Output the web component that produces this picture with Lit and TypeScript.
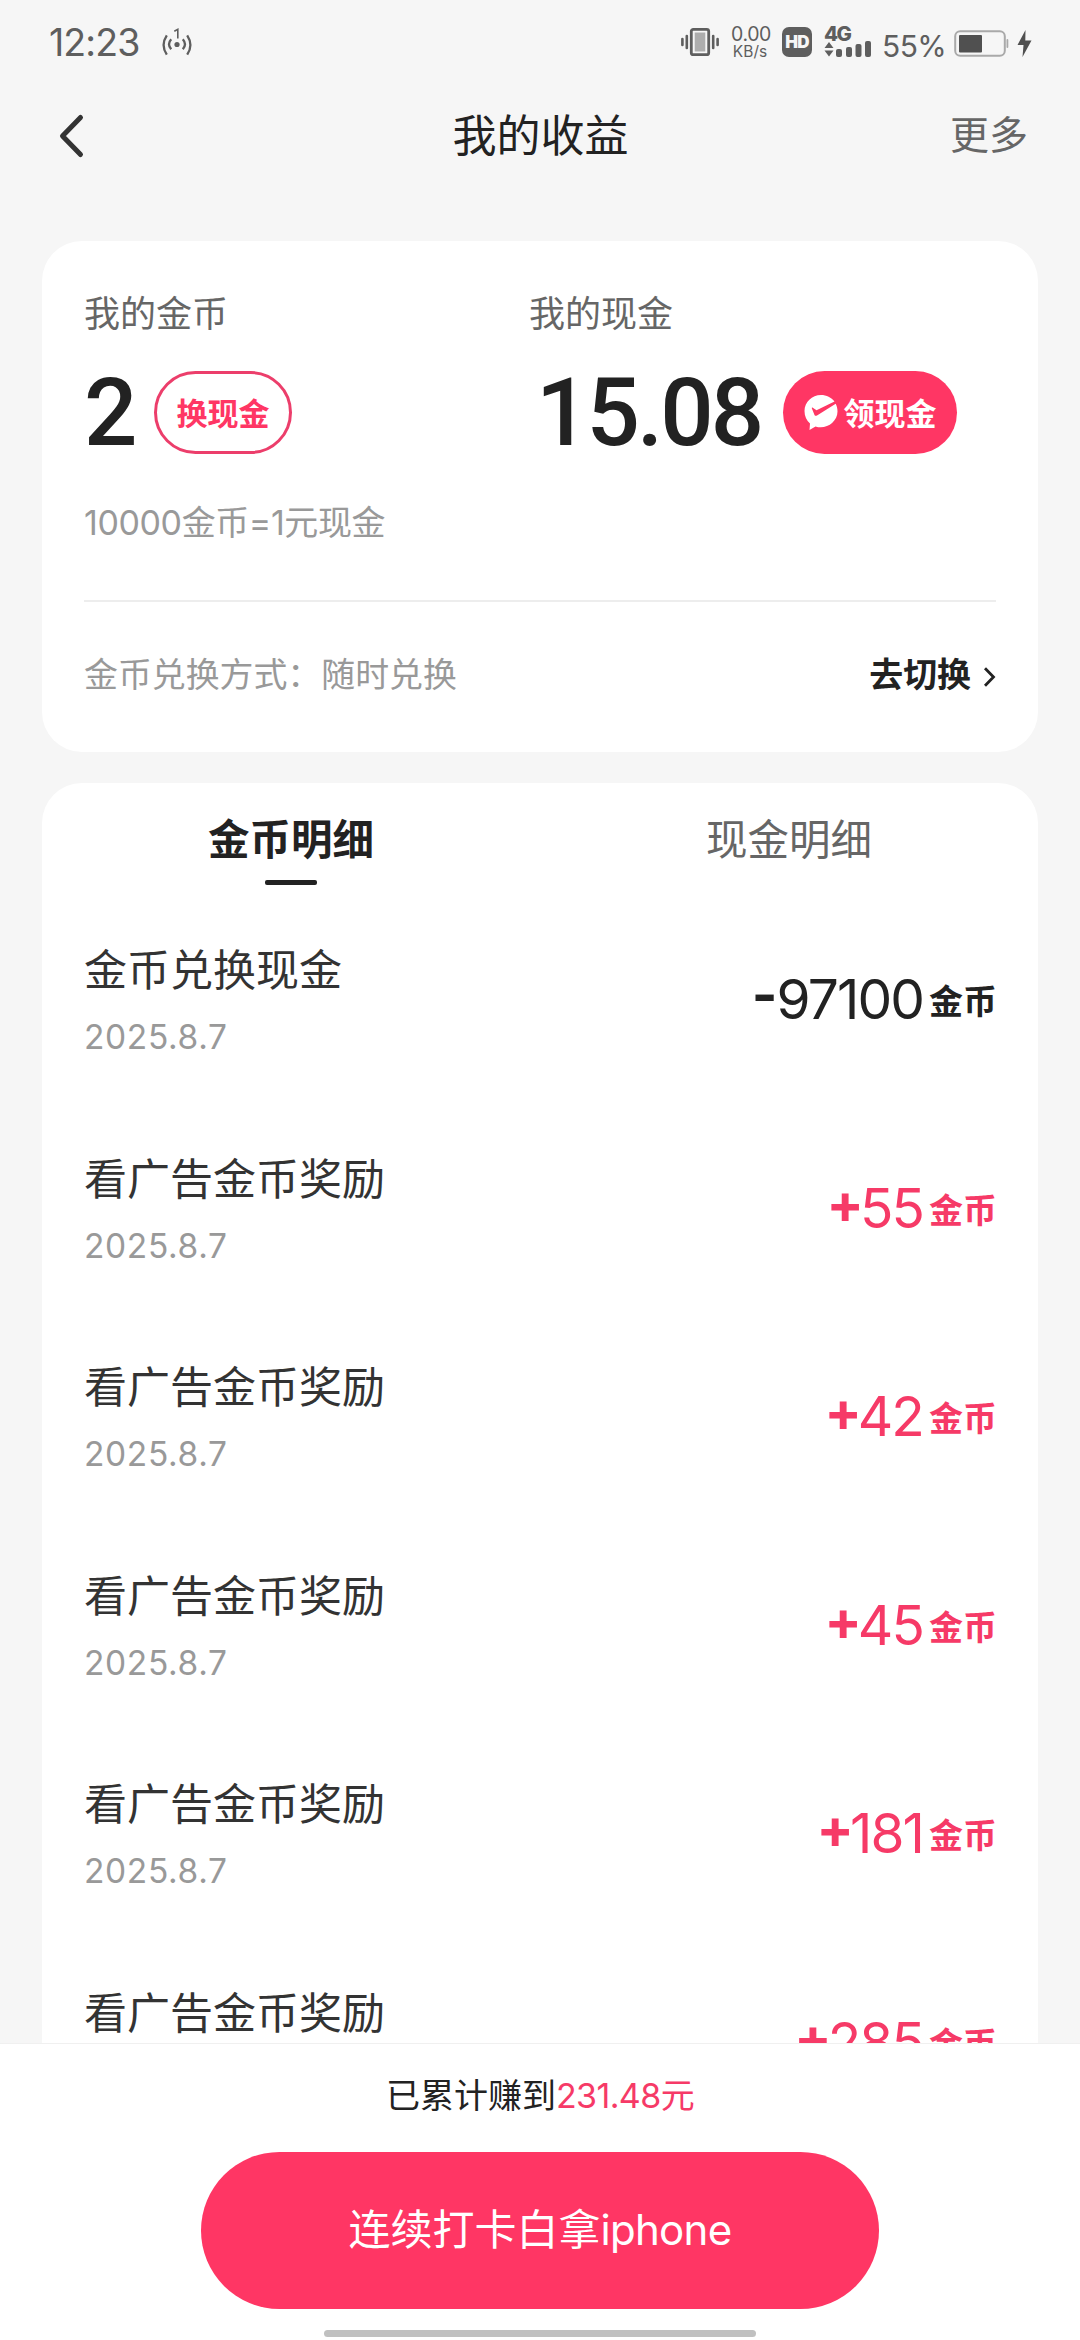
import { LitElement, html, css, nothing } from "lit";
import { customElement, property } from "lit/decorators.js";
import { classMap } from "lit/directives/class-map.js";

interface Entry {
  title: string;
  date?: string;
  sign: "+" | "-";
  amount: string;
}

const ENTRIES: Entry[] = [
  { title: "金币兑换现金", date: "2025.8.7", sign: "-", amount: "97100" },
  { title: "看广告金币奖励", date: "2025.8.7", sign: "+", amount: "55" },
  { title: "看广告金币奖励", date: "2025.8.7", sign: "+", amount: "42" },
  { title: "看广告金币奖励", date: "2025.8.7", sign: "+", amount: "45" },
  { title: "看广告金币奖励", date: "2025.8.7", sign: "+", amount: "181" },
  { title: "看广告金币奖励", sign: "+", amount: "285" },
];

@customElement("status-bar")
class StatusBar extends LitElement {
  static styles = css`
    :host {
      display: flex;
      justify-content: space-between;
      height: 84px;
      padding: 0 48px 0 49px;
      box-sizing: border-box;
      color: #5e5e5e;
    }
    svg { display: block; flex: none; }
    .side { display: flex; align-items: flex-start; }
    .time { font-size: 37.5px; line-height: 44px; margin-top: 21px; width: 113px; letter-spacing: -0.9px; white-space: nowrap; }
    .hotspot { margin-top: 27px; }
    .vibrate { margin-top: 27px; }
    .speed { width: 38px; margin: 24px 0 0 12px; text-align: center; white-space: nowrap; }
    .rate { font-size: 19.5px; line-height: 20px; letter-spacing: -0.4px; }
    .unit { font-size: 15.5px; line-height: 16px; }
    .hd {
      width: 30px; height: 30px; margin: 27px 0 0 13px; border-radius: 7px;
      background: #5e5e5e; color: #f6f6f6; text-align: center;
      font: 900 17px/30px Inter, sans-serif; letter-spacing: -0.8px;
    }
    .cell { width: 48px; margin: 26px 0 0 12px; }
    .net { font: 800 20.5px/16px Inter, sans-serif; letter-spacing: -1.6px; }
    .percent { width: 63px; margin: 29px 0 0 10px; font-size: 30px; line-height: 34px; letter-spacing: -0.6px; white-space: nowrap; }
    .battery { margin: 29px 0 0 9px; }
    .bolt { margin: 30px 0 0 8px; }
  `;

  render() {
    return html`
      <div class="side">
        <div class="time">12:23</div>
        <svg class="hotspot" width="30" height="30" viewBox="0 0 30 30" fill="none" stroke="#5e5e5e" stroke-width="2.3">
          <circle cx="15" cy="17.5" r="2.6" fill="#5e5e5e" stroke="none" />
          <path d="M9.2 12.3q-4.4 5 0 10M20.8 12.3q4.4 5 0 10M4.8 8.3q-6.4 9.7 0 19.4M25.2 8.3q6.4 9.7 0 19.4" />
          <path d="M12.3 4.2L15.8 2.3V11.5" stroke-width="1.6" />
        </svg>
      </div>
      <div class="side">
        <svg class="vibrate" width="38" height="30" viewBox="0 0 38 30">
          <rect x="10.3" y="2.3" width="17.4" height="25.4" rx="2" fill="none" stroke="#5e5e5e" stroke-width="2.8" />
          <rect x="13.7" y="5.5" width="10.6" height="19" fill="#adadad" />
          <path d="M1.4 12v6M5.8 9v12M32.2 9v12M36.6 12v6" stroke="#5e5e5e" stroke-width="2.6" stroke-linecap="round" />
        </svg>
        <div class="speed">
          <div class="rate">0.00</div>
          <div class="unit">KB/s</div>
        </div>
        <div class="hd">HD</div>
        <div class="cell">
          <div class="net">4G</div>
          <svg width="48" height="16" viewBox="0 0 48 16" overflow="visible" fill="#5e5e5e">
            <path d="M0.5 6L5 0L9.5 6ZM0.5 8.5L5 14.5L9.5 8.5Z" />
            <rect x="12" y="7" width="6" height="8" rx="2" />
            <rect x="22" y="5" width="6" height="10" rx="2" />
            <rect x="31.5" y="2" width="6" height="13" rx="2" />
            <rect x="41" y="-1" width="6" height="16" rx="2" />
          </svg>
        </div>
        <div class="percent">55%</div>
        <svg class="battery" width="55" height="29" viewBox="0 0 55 29">
          <rect x="1.2" y="2.2" width="49.6" height="24.6" rx="5" fill="none" stroke="#a9a9a9" stroke-width="2" />
          <rect x="5" y="6" width="23" height="17.5" rx="1" fill="#505050" />
          <rect x="52.5" y="10" width="1.8" height="9" rx="0.9" fill="#a9a9a9" />
        </svg>
        <svg class="bolt" width="15" height="27" viewBox="0 0 15 27" fill="#505050">
          <path d="M8.5 0L0.5 15H6.5L5.5 27L14.5 10.5H8.3Z" />
        </svg>
      </div>
    `;
  }
}

@customElement("balance-card")
class BalanceCard extends LitElement {
  static styles = css`
    :host {
      display: block;
      height: 511px;
      padding: 43px 42px 0;
      box-sizing: border-box;
      border-radius: 40px;
      background: #fff;
    }
    .balances { display: grid; grid-template-columns: 445px 1fr; }
    .label { font-size: 36px; line-height: 60px; color: #666; }
    .value { display: flex; align-items: center; height: 83px; margin-top: 27px; }
    .number {
      display: flex; align-items: center; height: 81px;
      font-family: Roboto, sans-serif; font-weight: 500; font-size: 94px; color: #222;
    }
    .coins { width: 70px; }
    .cash { width: 247px; padding-left: 7px; letter-spacing: -2.9px; }
    .pill {
      display: flex; align-items: center; justify-content: center; flex: none;
      height: 83px; box-sizing: border-box; border-radius: 42px; padding-bottom: 2px;
      font-weight: 700; font-size: 31px; white-space: nowrap;
    }
    .outline { width: 138px; border: 3px solid #ec3e6b; color: #ff3664; }
    .solid { width: 174px; background: #ff3664; color: #fff; gap: 6px; }
    .rule { margin-top: 43px; font-size: 34px; line-height: 52px; color: #999; letter-spacing: -0.4px; }
    .switch {
      display: flex; align-items: center; justify-content: space-between;
      margin-top: 51px; padding-top: 47px; border-top: 2px solid #ededed;
      font-size: 33.9px; line-height: 52px; color: #999;
    }
    .go { display: flex; align-items: center; gap: 12px; font-weight: 700; color: #222; }
    .chevron { margin-top: 3px; }
  `;

  render() {
    return html`
      <div class="balances">
        <div>
          <div class="label">我的金币</div>
          <div class="value">
            <div class="number coins">2</div>
            <div class="pill outline">换现金</div>
          </div>
        </div>
        <div>
          <div class="label">我的现金</div>
          <div class="value">
            <div class="number cash">15.08</div>
            <div class="pill solid">
              <svg width="34" height="36" viewBox="0 0 34 36">
                <path fill="#fff" d="M17 1C8 1 0.5 8 0.5 17C0.5 22 2.5 26.5 6 29.5L5.5 36L11.5 32.5C22 36 33.5 28 33.5 17.5C33.5 14.5 32.8 12 31.7 9.8L13 21.5C12 22 11 22 10.5 21L7.8 14.2C7.6 13.5 8.2 13.2 8.8 13.7L12.5 16.2L30.5 7.5C27.3 3.5 22.5 1 17 1Z" />
              </svg>
              <span>领现金</span>
            </div>
          </div>
        </div>
      </div>
      <div class="rule">10000金币=1元现金</div>
      <div class="switch">
        <div>金币兑换方式：随时兑换</div>
        <div class="go">
          <span>去切换</span>
          <svg class="chevron" width="13" height="20" viewBox="0 0 13 20" fill="none" stroke="#222" stroke-width="2.8">
            <path d="M2 1.2L10.5 10L2 18.8" />
          </svg>
        </div>
      </div>
    `;
  }
}

@customElement("entry-row")
class EntryRow extends LitElement {
  @property({ attribute: false }) entry!: Entry;

  static styles = css`
    :host {
      display: flex;
      justify-content: space-between;
      height: 208.6px;
      padding: 35px 41px 0 42px;
      box-sizing: border-box;
    }
    .title { font-size: 43px; line-height: 60px; color: #333; }
    .date { margin-top: 12px; font-size: 33.5px; line-height: 50px; letter-spacing: 0.65px; color: #999; }
    .sum { display: flex; align-items: flex-start; height: 70px; margin-top: 24px; color: #222; line-height: 70px; }
    .gain { color: #f63a67; }
    .sign { font-size: 55px; font-weight: 700; line-height: 61px; margin-right: -1px; }
    .gain .sign { margin-right: -4px; }
    .amount { font-size: 55px; font-weight: 400; letter-spacing: -1.9px; }
    .coin { font-size: 34px; font-weight: 700; margin-left: 6px; line-height: 75px; }
  `;

  render() {
    const { title, date, sign, amount } = this.entry;
    return html`
      <div>
        <div class="title">${title}</div>
        ${date ? html`<div class="date">${date}</div>` : nothing}
      </div>
      <div class=${classMap({ sum: true, gain: sign === "+" })}>
        <span class="sign">${sign}</span><span class="amount">${amount}</span><span class="coin">金币</span>
      </div>
    `;
  }
}

@customElement("app-root")
class AppRoot extends LitElement {
  static styles = css`
    :host {
      display: flex;
      flex-direction: column;
      width: 1080px;
      height: 2340px;
      overflow: hidden;
      background: #f6f6f6;
      font-family: Inter, "Noto Sans CJK SC", sans-serif;
    }
    status-bar { flex: none; }
    .nav {
      display: grid; grid-template-columns: 1fr auto 1fr; align-items: center;
      flex: none; height: 104px; padding: 0 52px 0 53px; color: #222;
    }
    .back { margin-left: 5px; }
    .nav h1 { margin: 0; font-size: 44px; line-height: 60px; font-weight: 400; }
    .more { justify-self: end; font-size: 39px; line-height: 60px; padding-bottom: 2px; color: #666; }
    .content {
      display: flex; flex-direction: column; gap: 31px; flex: 1; min-height: 0;
      padding: 53px 42px 0; overflow: hidden;
    }
    balance-card { flex: none; }
    .details { flex: none; height: 1400px; border-radius: 40px 40px 0 0; background: #fff; }
    .tabs { display: grid; grid-template-columns: 1fr 1fr; height: 122px; }
    .tab { display: flex; flex-direction: column; align-items: center; font-size: 41.5px; line-height: 60px; padding-top: 27px; color: #666; }
    .active { font-weight: 700; color: #222; }
    .active::after { content: ""; width: 52px; height: 5px; margin-top: 10px; border-radius: 2px; background: #222; }
    .footer {
      display: flex; flex-direction: column; align-items: center; flex: none;
      height: 297px; box-sizing: border-box; border-top: 1px solid #f0f0f0; background: #fff;
    }
    .total { margin-top: 26px; font-size: 34px; line-height: 52px; color: #222; }
    .money { color: #f63a67; letter-spacing: -0.6px; }
    .action {
      width: 678px; height: 157px; margin: 30px 0 21px; border-radius: 79px; background: #ff3664;
      color: #fff; font-size: 42px; line-height: 155px; text-align: center;
    }
    .latin { letter-spacing: -0.7px; }
    .home { width: 432px; height: 7px; border-radius: 4px; background: #c0c0c0; }
  `;

  render() {
    return html`
      <status-bar></status-bar>
      <div class="nav">
        <svg class="back" width="28" height="46" viewBox="0 0 28 46" fill="none" stroke="#333" stroke-width="5" stroke-linecap="round" stroke-linejoin="round">
          <path d="M22.5 4.5L4.5 23L22.5 41.5" />
        </svg>
        <h1>我的收益</h1>
        <div class="more">更多</div>
      </div>
      <div class="content">
        <balance-card></balance-card>
        <div class="details">
          <div class="tabs">
            <div class="tab active">金币明细</div>
            <div class="tab">现金明细</div>
          </div>
          ${ENTRIES.map((entry) => html`<entry-row .entry=${entry}></entry-row>`)}
        </div>
      </div>
      <div class="footer">
        <div class="total">已累计赚到<span class="money">231.48元</span></div>
        <div class="action">连续打卡白拿<span class="latin">iphone</span></div>
        <div class="home"></div>
      </div>
    `;
  }
}
